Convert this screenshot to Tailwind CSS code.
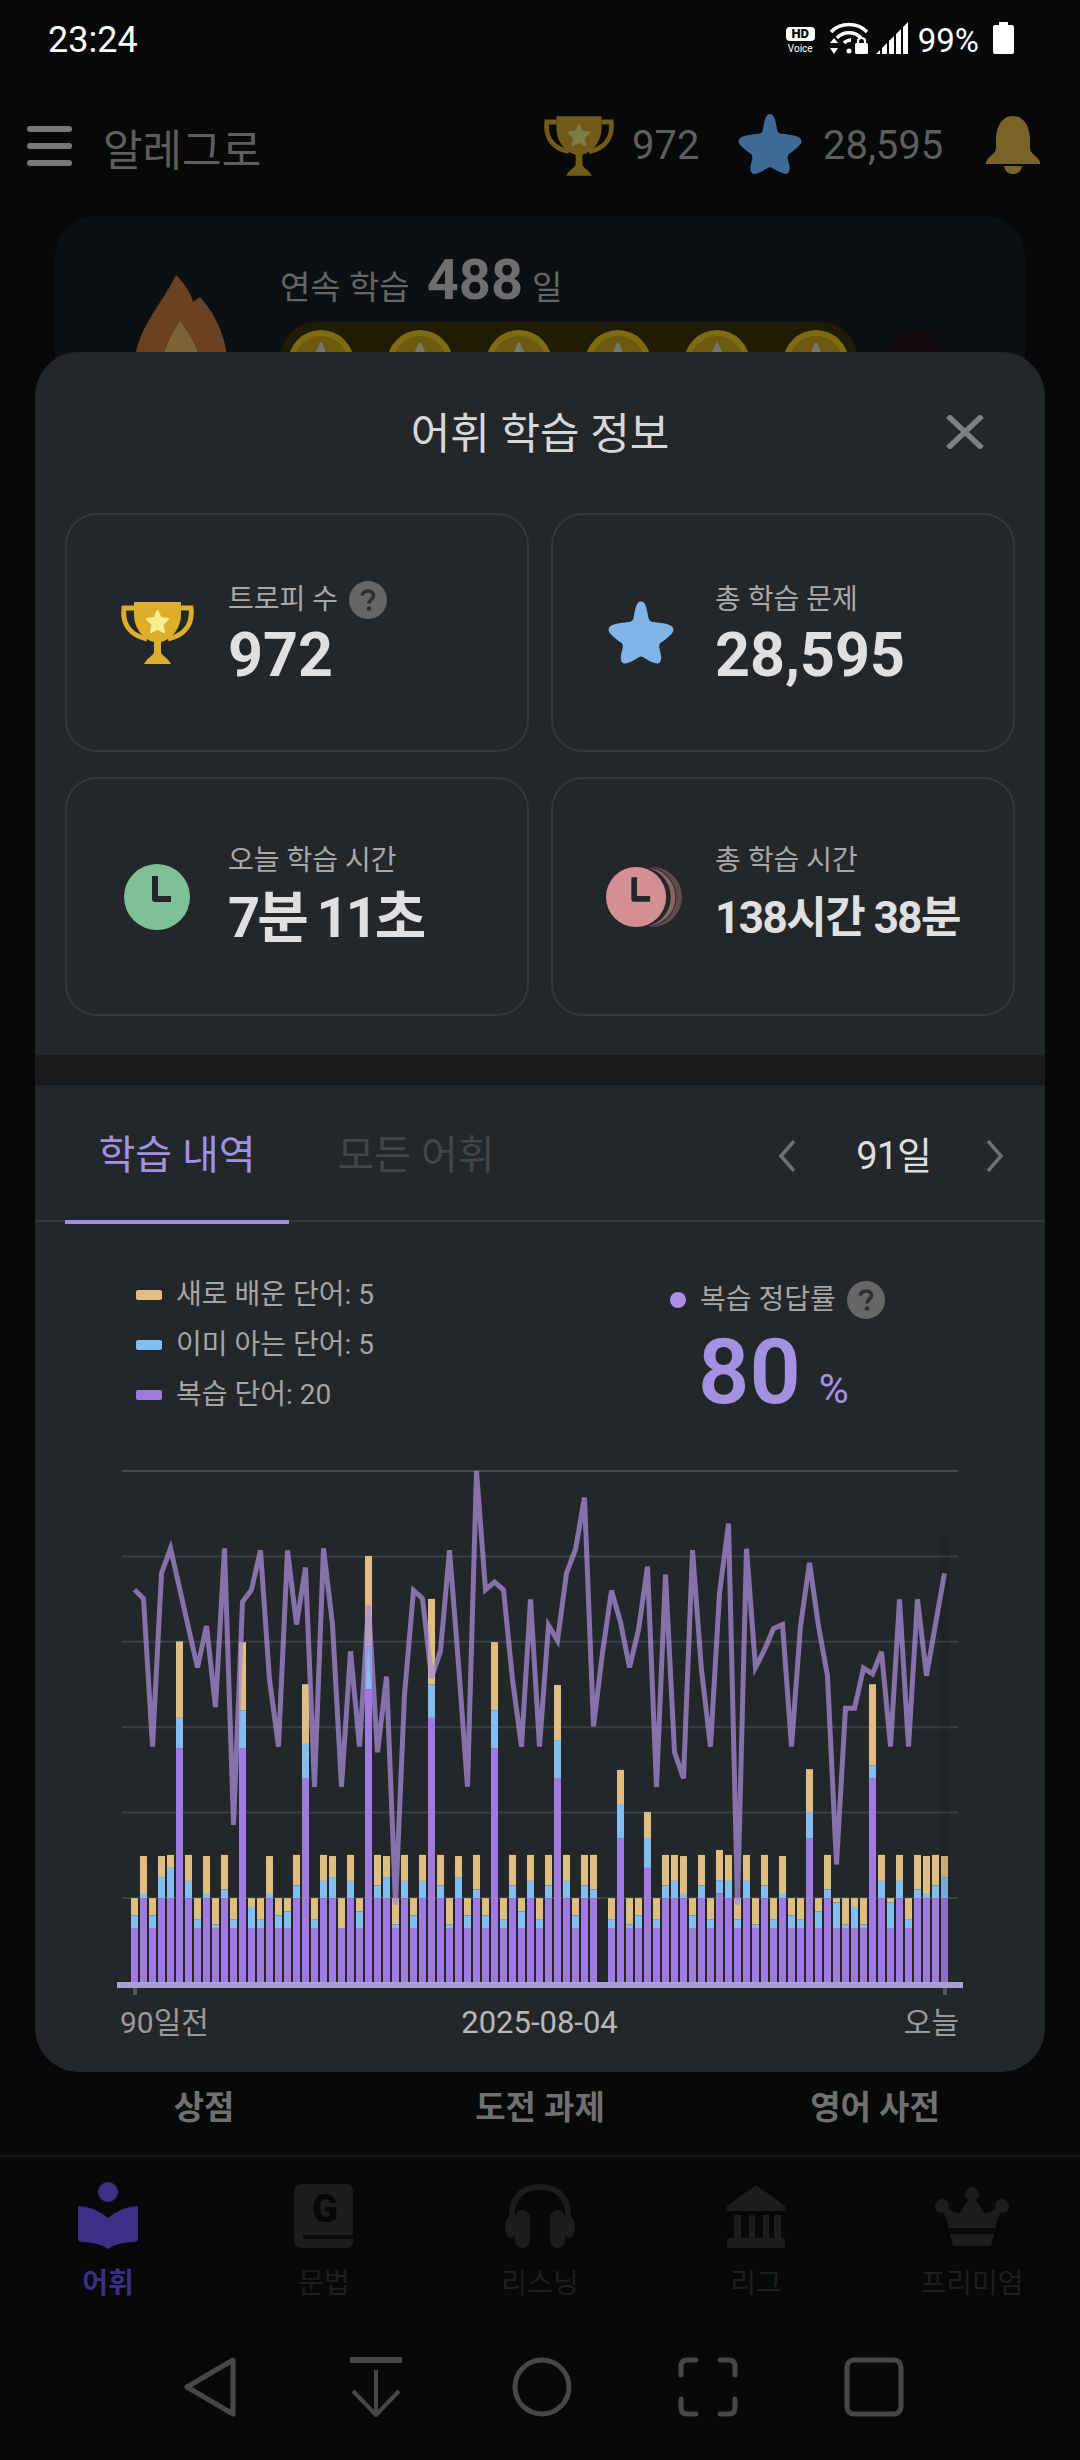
<!DOCTYPE html>
<html lang="ko">
<head>
<meta charset="UTF-8">
<meta name="viewport" content="width=device-width, initial-scale=1.0">
<title>어휘 학습 정보</title>
<script src="https://cdn.jsdelivr.net/npm/@tailwindcss/browser@4"></script>
</head>
<body class="bg-[#070808]">
<svg class="hidden" aria-hidden="true">
  <defs>
    <symbol id="trophy" viewBox="0 0 75 62">
      <path d="M14 6H4C2 22 10 33 27 37M61 6H71C73 22 65 33 48 37" fill="none" stroke="#dcae2c" stroke-width="5"/>
      <path d="M14 0H61V12C61 28 50 38 41 40V50C41 53 48 56 51 62H24C27 56 34 53 34 50V40C25 38 14 28 14 12Z" fill="#dcae2c"/>
      <path d="M37.500 9L40.500 16L48 17L42.500 22.500L44 30L37.500 26.500L31 30L32.500 22.500L27 17L34.500 16Z" fill="#f6ef8e" stroke="#f6ef8e" stroke-width="2" stroke-linejoin="round"/>
    </symbol>
    <symbol id="star" viewBox="0 0 64 61">
      <path d="M32 3C34 3 35 7 37 18C38 21 39 22 42 22.500C55 24 61 25 61 28C61 30 56 34 49 39C47 41 47 42 47 45C49 52 50 57 48 58C46 59 40 55 35 52C33 51 31 51 29 52C24 55 18 59 16 58C14 57 15 52 17 45C17 42 17 41 15 39C8 34 3 30 3 28C3 25 9 24 22 22.500C25 22 26 21 27 18C29 7 30 3 32 3Z" fill="currentColor" stroke="currentColor" stroke-width="5" stroke-linejoin="round"/>
    </symbol>
    <symbol id="help" viewBox="0 0 38 38">
      <circle cx="19" cy="19" r="19" fill="#666767"/>
      <path d="M13.500 14.500C13.500 11.500 16 10 19 10C22 10 24.500 11.500 24.500 14.500C24.500 18 20 18.500 20 22.500" fill="none" stroke="#2c2e30" stroke-width="3.600"/>
      <circle cx="20" cy="27.500" r="2.300" fill="#2c2e30"/>
    </symbol>
    <symbol id="coin" viewBox="0 0 66 66">
      <circle cx="33" cy="33" r="33" fill="#7f6b12"/>
      <circle cx="33" cy="33" r="27" fill="#6b5a10"/>
      <path d="M33 14L40 30H26Z" fill="#77766a" stroke="#77766a" stroke-width="3" stroke-linejoin="round"/>
    </symbol>
  </defs>
</svg>

<div class="relative w-[1080px] h-[2460px] overflow-hidden flex flex-col bg-[#070808] font-[Roboto,'Noto_Sans_CJK_KR',sans-serif]">

  <!-- status bar -->
  <div class="h-[80px] flex items-start justify-between pl-[48px] pr-[66px] pt-[19px] text-white">
    <span class="text-[36px] leading-[42px]">23:24</span>
    <div class="flex items-start">
      <div class="w-[29px] mt-[8px] flex flex-col items-center">
        <div class="w-[29px] h-[14px] rounded-[4px] bg-white text-[#070808] text-[13px] leading-[14px] font-black text-center">HD</div>
        <div class="text-[10px] leading-[11px] mt-[2px]">Voice</div>
      </div>
      <svg class="ml-[15px] mt-[3px]" width="38" height="32" viewBox="0 0 38 32" fill="none" stroke="#fff" stroke-width="3.500">
        <path d="M1 10C10 0 28 0 37 10"/>
        <path d="M7 16C13 9 25 9 31 16"/>
        <path d="M14 21C16 19 18 18 21 18"/>
        <circle cx="19" cy="29" r="2.500" fill="#fff" stroke="none"/>
        <path d="M4 16L8 21H0ZM4 32L0 26H8Z" fill="#fff" stroke="none"/>
        <rect x="25" y="21" width="13" height="11" rx="1.500" fill="#fff" stroke="none"/>
        <path d="M28 21V19C28 15 35 15 35 19V21" stroke-width="2.200"/>
      </svg>
      <svg class="ml-[8px] mt-[3px]" width="32" height="32" viewBox="0 0 32 32" fill="#fff">
        <path d="M0 32L4 28V32ZM6 26L11 21V32H6ZM13 19L18 14V32H13ZM20 12L25 7V32H20ZM27 5L32 0V32H27Z"/>
      </svg>
      <span class="ml-[10px] mt-[3px] text-[33px] leading-[38px]">99%</span>
      <svg class="ml-[14px] mt-[3px]" width="21" height="32" viewBox="0 0 21 32" fill="#fff">
        <rect x="6" y="0" width="9" height="4"/>
        <rect x="0" y="3" width="21" height="29" rx="2"/>
      </svg>
    </div>
  </div>

  <!-- app header -->
  <div class="h-[136px] flex items-start pl-[27px] pt-[36px] text-[#5e5e5e]">
    <div class="w-[45px] mt-[10px] flex flex-col gap-[11px]">
      <div class="h-[6px] rounded-full bg-[#787878]"></div>
      <div class="h-[6px] rounded-full bg-[#787878]"></div>
      <div class="h-[6px] rounded-full bg-[#787878]"></div>
    </div>
    <span class="ml-[31px] mt-[6px] w-[161px] text-[43px] leading-[58px]">알레그로</span>
    <svg class="ml-[279px] opacity-50" width="72" height="60"><use href="#trophy"/></svg>
    <span class="ml-[17px] mt-[5px] w-[66px] text-[40px] leading-[50px]">972</span>
    <svg class="ml-[40px] -mt-[3px] text-[#3f6a96]" width="64" height="62"><use href="#star"/></svg>
    <span class="ml-[21px] mt-[5px] w-[121px] text-[40px] leading-[50px]">28,595</span>
    <svg class="ml-[41px]" width="56" height="58" viewBox="0 0 56 58" fill="#7a6326">
      <path d="M28 0C16 0 11 12 11 24V32C11 38 3 40 1 46V48H55V46C53 40 45 38 45 32V24C45 12 40 0 28 0Z"/>
      <path d="M19 50H37C36 56 32 58 28 58C24 58 20 56 19 50Z"/>
    </svg>
  </div>

  <!-- streak card, mostly covered by the dialog -->
  <div class="mx-[55px] h-[300px] rounded-t-[40px] bg-[#0c1012] flex pl-[79px] pt-[44px]">
    <svg class="mt-[15px]" width="94" height="110" viewBox="0 0 94 110">
      <path d="M42 0C50 8 57 18 59 27C62 25 64 23 66 22C82 40 94 65 94 95V110H0V95C0 55 28 30 42 0Z" fill="#6b4221"/>
      <path d="M46 46C58 62 66 78 66 92V110H28V92C28 78 36 62 46 46Z" fill="#7c6338"/>
    </svg>
    <div class="ml-[52px] -mt-[6px]">
      <div class="flex items-baseline text-[#666] leading-[52px]">
        <span class="text-[33px]">연속 학습</span>
        <span class="ml-[17px] text-[56px] font-bold text-[#6e6e6e]">488</span>
        <span class="ml-[9px] text-[33px]">일</span>
      </div>
      <div class="mt-[8px] flex items-start">
        <div class="w-[577px] h-[80px] rounded-t-[36px] bg-[#1f1b05] flex gap-[33px] pl-[8px] pt-[8px]">
          <svg width="66" height="66"><use href="#coin"/></svg>
          <svg width="66" height="66"><use href="#coin"/></svg>
          <svg width="66" height="66"><use href="#coin"/></svg>
          <svg width="66" height="66"><use href="#coin"/></svg>
          <svg width="66" height="66"><use href="#coin"/></svg>
          <svg width="66" height="66"><use href="#coin"/></svg>
        </div>
        <div class="ml-[28px] mt-[8px] w-[62px] h-[62px] rounded-full bg-[#150c10]"></div>
      </div>
    </div>
  </div>

  <!-- bottom of the page behind the dialog -->
  <div class="mt-auto">
    <div class="h-[98px] border-b-2 border-[#141615] flex pt-[22px] text-[33px] font-bold text-[#707070] text-center leading-[54px]">
      <span class="w-[408px]">상점</span>
      <span class="w-[264px]">도전 과제</span>
      <span class="w-[406px]">영어 사전</span>
    </div>
    <div class="h-[150px] flex pt-[25px] text-[28px] leading-[36px] text-[#1e1f20]">
      <div class="w-[216px] flex flex-col items-center">
        <svg class="h-[68px]" width="60" height="68" viewBox="0 0 60 68" fill="#3b3085">
          <ellipse cx="30" cy="10" rx="10" ry="10"/>
          <path d="M0 24Q15 24 30 36Q45 24 60 24V56Q60 60 56 60Q40 60 30 67Q20 60 4 60Q0 60 0 56Z"/>
        </svg>
        <span class="mt-[16px] font-bold text-[#3b3085]">어휘</span>
      </div>
      <div class="w-[216px] flex flex-col items-center">
        <svg class="h-[68px]" width="60" height="68" viewBox="0 0 60 68">
          <rect x="0" y="2" width="59" height="64" rx="7" fill="#1d1d1d"/>
          <path d="M9 55H59" stroke="#070808" stroke-width="4"/>
          <text x="31" y="40" text-anchor="middle" font-size="38" font-weight="900" fill="#070808">G</text>
        </svg>
        <span class="mt-[16px]">문법</span>
      </div>
      <div class="w-[216px] flex flex-col items-center">
        <svg class="h-[68px]" width="70" height="68" viewBox="0 0 70 68" fill="#1d1d1d">
          <path d="M7 46V32C7 14 19 5 35 5C51 5 63 14 63 32V46" fill="none" stroke="#1d1d1d" stroke-width="6"/>
          <rect x="10" y="28" width="15" height="38" rx="7.500"/>
          <rect x="45" y="28" width="15" height="38" rx="7.500"/>
          <ellipse cx="6" cy="45" rx="6" ry="11"/>
          <ellipse cx="64" cy="45" rx="6" ry="11"/>
        </svg>
        <span class="mt-[16px]">리스닝</span>
      </div>
      <div class="w-[216px] flex flex-col items-center">
        <svg class="h-[68px]" width="58" height="68" viewBox="0 0 58 68" fill="#1d1d1d">
          <path d="M29 3L58 24V29H0V24Z"/>
          <rect x="7" y="33" width="7" height="23"/>
          <rect x="22" y="33" width="6" height="23"/>
          <rect x="36" y="33" width="6" height="23"/>
          <rect x="47" y="33" width="7" height="23"/>
          <rect x="0" y="56" width="58" height="10" rx="2"/>
        </svg>
        <span class="mt-[16px]">리그</span>
      </div>
      <div class="w-[216px] flex flex-col items-center">
        <svg class="h-[68px]" width="74" height="68" viewBox="0 0 74 68" fill="#1d1d1d">
          <circle cx="37" cy="12" r="7"/>
          <circle cx="7" cy="24" r="7"/>
          <circle cx="67" cy="24" r="7"/>
          <path d="M37 12L50 32L67 24L60 46H14L7 24L24 32Z"/>
          <path d="M15 52H59L56 64H18Z"/>
        </svg>
        <span class="mt-[16px]">프리미엄</span>
      </div>
    </div>
    <!-- system navigation -->
    <div class="h-[153px] flex justify-center pl-[3px] pt-[50px]">
      <div class="w-[166px] flex justify-center">
        <svg width="52" height="60" viewBox="0 0 52 60" fill="none" stroke="#474747" stroke-width="5" stroke-linejoin="round"><path d="M49 3V57L3 30Z"/></svg>
      </div>
      <div class="w-[166px] flex justify-center">
        <svg width="52" height="60" viewBox="0 0 52 60" fill="none" stroke="#474747" stroke-width="4" stroke-linejoin="round"><path d="M0 3H52" stroke-width="6"/><path d="M26 13V57M3 34L26 58L49 34"/></svg>
      </div>
      <div class="w-[166px] flex justify-center">
        <svg width="60" height="60" viewBox="0 0 60 60" fill="none" stroke="#474747" stroke-width="5"><circle cx="30" cy="30" r="27"/></svg>
      </div>
      <div class="w-[166px] flex justify-center">
        <svg width="60" height="60" viewBox="0 0 60 60" fill="none" stroke="#474747" stroke-width="5" stroke-linecap="round"><path d="M3 18V9Q3 3 9 3H18M42 3H51Q57 3 57 9V18M57 42V51Q57 57 51 57H42M18 57H9Q3 57 3 51V42"/></svg>
      </div>
      <div class="w-[166px] flex justify-center">
        <svg width="60" height="60" viewBox="0 0 60 60" fill="none" stroke="#474747" stroke-width="5"><rect x="3" y="3" width="54" height="54" rx="7"/></svg>
      </div>
    </div>
  </div>

  <!-- dialog -->
  <div class="absolute left-[35px] top-[352px] w-[1010px] h-[1720px] rounded-[44px] bg-[#24272a] overflow-hidden">
    <div class="relative h-[161px] flex items-start justify-center pt-[53px]">
      <h2 class="text-[43px] leading-[58px] text-[#d8d8d8]">어휘 학습 정보</h2>
      <svg class="absolute right-[61px] top-[63px]" width="38" height="34" viewBox="0 0 38 34" fill="none" stroke="#7a8288" stroke-width="5.500"><path d="M2 1L36 33M36 1L2 33"/></svg>
    </div>

    <div class="grid grid-cols-2 gap-x-[22px] gap-y-[25px] px-[30px]">
      <div class="h-[239px] rounded-[32px] border-2 border-[#33363a] flex items-center pl-[48px]">
        <div class="w-[84px] flex justify-center"><svg width="75" height="62"><use href="#trophy"/></svg></div>
        <div class="ml-[29px] pt-[5px]">
          <div class="flex items-center h-[38px] text-[28px] text-[#a8a8a8]">트로피 수<svg class="ml-[11px]" width="38" height="38"><use href="#help"/></svg></div>
          <div class="mt-[1px] text-[61px] leading-[70px] font-bold text-[#e0e0e0]">972</div>
        </div>
      </div>
      <div class="h-[239px] rounded-[32px] border-2 border-[#33363a] flex items-center pl-[46px]">
        <div class="w-[84px] flex justify-center text-[#7fb6ea]"><svg width="66" height="63"><use href="#star"/></svg></div>
        <div class="ml-[32px] pt-[5px]">
          <div class="h-[38px] leading-[38px] text-[28px] text-[#a8a8a8]">총 학습 문제</div>
          <div class="mt-[1px] text-[61px] leading-[70px] font-bold text-[#e0e0e0]">28,595</div>
        </div>
      </div>
      <div class="h-[239px] rounded-[32px] border-2 border-[#33363a] flex items-center pl-[48px]">
        <div class="w-[84px] flex justify-center">
          <svg width="66" height="66" viewBox="0 0 66 66">
            <circle cx="33" cy="33" r="33" fill="#7fc196"/>
            <path d="M31 12V35H47" fill="none" stroke="#24272a" stroke-width="6" stroke-linejoin="round"/>
          </svg>
        </div>
        <div class="ml-[29px] pt-[2px]">
          <div class="h-[38px] leading-[38px] text-[28px] text-[#a8a8a8]">오늘 학습 시간</div>
          <div class="mt-[3px] text-[56px] leading-[70px] tracking-[-3px] font-bold text-[#e0e0e0]">7분 11초</div>
        </div>
      </div>
      <div class="h-[239px] rounded-[32px] border-2 border-[#33363a] flex items-center pl-[46px]">
        <div class="w-[84px] flex justify-center">
          <svg class="ml-[7px]" width="82" height="66" viewBox="0 0 82 66">
            <circle cx="49" cy="33" r="32" fill="#5f4a4d"/>
            <circle cx="43" cy="33" r="32" fill="#24272a"/>
            <circle cx="43" cy="33" r="31" fill="#8a6366"/>
            <circle cx="37" cy="33" r="32" fill="#24272a"/>
            <circle cx="32" cy="33" r="32" fill="#d48f92"/>
            <path d="M30 12V35H47" fill="none" stroke="#24272a" stroke-width="6" stroke-linejoin="round"/>
          </svg>
        </div>
        <div class="ml-[32px] pt-[2px]">
          <div class="h-[38px] leading-[38px] text-[28px] text-[#a8a8a8]">총 학습 시간</div>
          <div class="mt-[3px] text-[44px] leading-[70px] tracking-[-1.5px] font-bold text-[#e0e0e0]">138시간 38분</div>
        </div>
      </div>
    </div>

    <div class="mt-[39px] h-[30px] bg-[#1a1b1d]"></div>

    <!-- tabs -->
    <div class="h-[137px] border-b-2 border-[#333538] flex items-start pl-[30px] text-[40px] leading-[56px]">
      <div class="relative h-[137px] w-[224px] pt-[43px] text-center text-[#a391e2]">
        학습 내역
        <div class="absolute left-0 right-0 -bottom-[2px] h-[4px] bg-[#a08fe0]"></div>
      </div>
      <div class="ml-[31px] w-[192px] pt-[43px] text-center text-[#434547]">모든 어휘</div>
      <div class="ml-auto mr-[41px] pt-[43px] flex items-center text-[38px] tracking-[-1px] text-[#dedede]">
        <svg width="18" height="32" viewBox="0 0 18 32" fill="none" stroke="#68727a" stroke-width="3.500"><path d="M16 1L3 16L16 31"/></svg>
        <span class="ml-[60px] mr-[55px]">91일</span>
        <svg width="18" height="32" viewBox="0 0 18 32" fill="none" stroke="#68727a" stroke-width="3.500"><path d="M2 1L15 16L2 31"/></svg>
      </div>
    </div>

    <!-- legend and accuracy -->
    <div class="h-[238px] flex pl-[101px] pt-[48px]">
      <div class="w-[534px] text-[28px] leading-[50px] text-[#a5a5a5]">
        <div class="flex items-center"><span class="w-[26px] h-[10px] mr-[14px] rounded-[2px] bg-[#e0c080]"></span>새로 배운 단어: 5</div>
        <div class="flex items-center"><span class="w-[26px] h-[10px] mr-[14px] rounded-[2px] bg-[#84bdf0]"></span>이미 아는 단어: 5</div>
        <div class="flex items-center"><span class="w-[26px] h-[10px] mr-[14px] rounded-[2px] bg-[#a07bdf]"></span>복습 단어: 20</div>
      </div>
      <div>
        <div class="flex items-center h-[40px] mt-[10px] text-[28px] text-[#a5a5a5]">
          <span class="w-[16px] h-[16px] rounded-full bg-[#ac8dea] mr-[14px]"></span>복습 정답률
          <svg class="ml-[11px]" width="38" height="38"><use href="#help"/></svg>
        </div>
        <div class="flex items-baseline pl-[28px] mt-[13px] text-[#a391e2] leading-[80px]">
          <span class="text-[90px] font-semibold">80</span>
          <span class="ml-[18px] text-[41px]">%</span>
        </div>
      </div>
    </div>

    <!-- chart: viewBox uses page coordinates -->
    <svg id="chart" class="block" width="1010" height="540" viewBox="35 1460 1010 540"></svg>

    <div class="flex pl-[85px] pr-[86px] mt-[3px] text-[30px] leading-[40px] text-[#9a9a9a]">
      <span class="flex-1">90일전</span>
      <span class="text-[#b8b8b8] text-[31px]">2025-08-04</span>
      <span class="flex-1 text-right">오늘</span>
    </div>
  </div>
</div>

<script>
  // stack tops per day, [review, known, new], measured on a 2.613x scale from the axis
  const bars = [
    [1249,1216,1171],[1171,1160,1061],[1249,1216,1171],[1171,1116,1061],[1171,1092,1058],[779,700,500],[1171,1126,1058],
    [1249,1226,1171],[1171,1160,1061],[1249,1240,1171],[1171,1148,1058],[1249,1226,1171],[779,680,502],[1249,1194,1171],
    [1249,1226,1171],[1171,1160,1061],[1249,1216,1171],[1249,1206,1171],[1171,1138,1058],[857,768,612],[1249,1226,1171],
    [1171,1126,1058],[1171,1116,1061],[1249,1249,1171],[1171,1126,1058],[1249,1206,1171],[625,513,277],[1171,1138,1058],
    [1171,1116,1061],[1249,1240,1171],[1171,1126,1058],[1249,1216,1171],[1171,1126,1058],[700,612,389],[1171,1138,1058],
    [1249,1240,1171],[1171,1116,1061],[1249,1216,1171],[1171,1148,1058],[1249,1216,1171],[779,680,502],[1249,1226,1171],
    [1171,1138,1058],[1249,1206,1171],[1171,1126,1058],[1249,1226,1171],[1171,1138,1058],[857,758,614],[1171,1126,1058],
    [1249,1216,1171],[1171,1138,1058],[1171,1148,1058],null,[1249,1226,1171],[1014,925,836],[1249,1240,1171],[1249,1216,1171],
    [1092,1014,946],[1249,1226,1171],[1171,1138,1058],[1171,1126,1058],[1171,1160,1061],[1249,1216,1171],[1171,1138,1058],
    [1249,1226,1171],[1158,1124,1045],[1171,1126,1058],[1249,1226,1171],[1171,1126,1058],[1249,1240,1171],[1171,1138,1058],
    [1249,1226,1171],[1171,1160,1061],[1249,1216,1171],[1249,1226,1171],[1014,946,834],[1249,1206,1171],[1171,1148,1058],
    [1249,1182,1171],[1249,1240,1171],[1249,1194,1171],[1249,1240,1171],[857,824,612],[1171,1126,1058],[1249,1182,1171],
    [1171,1126,1058],[1249,1226,1171],[1171,1148,1058],[1171,1160,1061],[1171,1138,1058],[1171,1116,1061]
  ];
  const rate = [
    365,388,775,322,257,360,465,568,460,672,257,980,397,365,262,600,775,262,456,307,880,257,456,880,526,775,405,790,592,1188,
    640,367,388,595,525,262,560,880,55,365,345,365,600,775,390,775,458,498,322,260,124,722,530,367,450,568,470,305,880,325,
    790,858,262,575,775,375,192,1188,258,568,522,467,456,775,460,295,460,590,1083,675,675,570,585,527,775,390,775,390,590,455,322
  ];

  const chart = document.getElementById('chart');
  const toY = v => 1450 + v / 2.613;
  const colX = i => 131 + 9 * i;

  function add(tag, attrs) {
    const el = document.createElementNS('http://www.w3.org/2000/svg', tag);
    for (const k in attrs) el.setAttribute(k, attrs[k]);
    chart.appendChild(el);
    return el;
  }

  // grid
  for (let i = 0; i < 6; i++) {
    const y = 1471 + i * 85.4;
    add('line', { x1: 122, x2: 958, y1: y, y2: y, stroke: i == 0 ? '#474c4b' : '#3c3f41', 'stroke-width': 2 });
  }

  // stacked bars
  const bottom = 1983;
  bars.forEach((b, i) => {
    if (!b) return;
    const [review, known, fresh] = b.map(toY);
    add('rect', { x: colX(i), y: fresh, width: 7, height: known - fresh, fill: '#dfbe82' });
    add('rect', { x: colX(i), y: known, width: 7, height: review - known, fill: '#84bdf0' });
    add('rect', { x: colX(i), y: review, width: 7, height: bottom - review, fill: '#a07bdf' });
  });

  // today column shade
  add('rect', { x: 940, y: 1536, width: 9, height: 446, fill: '#000', opacity: 0.1 });

  // accuracy line
  add('polyline', {
    points: rate.map((v, i) => (colX(i) + 3.5) + ',' + toY(v).toFixed(1)).join(' '),
    fill: 'none', stroke: '#a78bd6', 'stroke-width': 5, 'stroke-opacity': 0.75, 'stroke-linejoin': 'miter'
  });

  // axis and end ticks
  add('rect', { x: 117, y: 1982, width: 846, height: 6, fill: '#a8a0d4' });
  add('rect', { x: 133, y: 1988, width: 4, height: 7, fill: '#555' });
  add('rect', { x: 943, y: 1988, width: 4, height: 7, fill: '#555' });
</script>
</body>
</html>
